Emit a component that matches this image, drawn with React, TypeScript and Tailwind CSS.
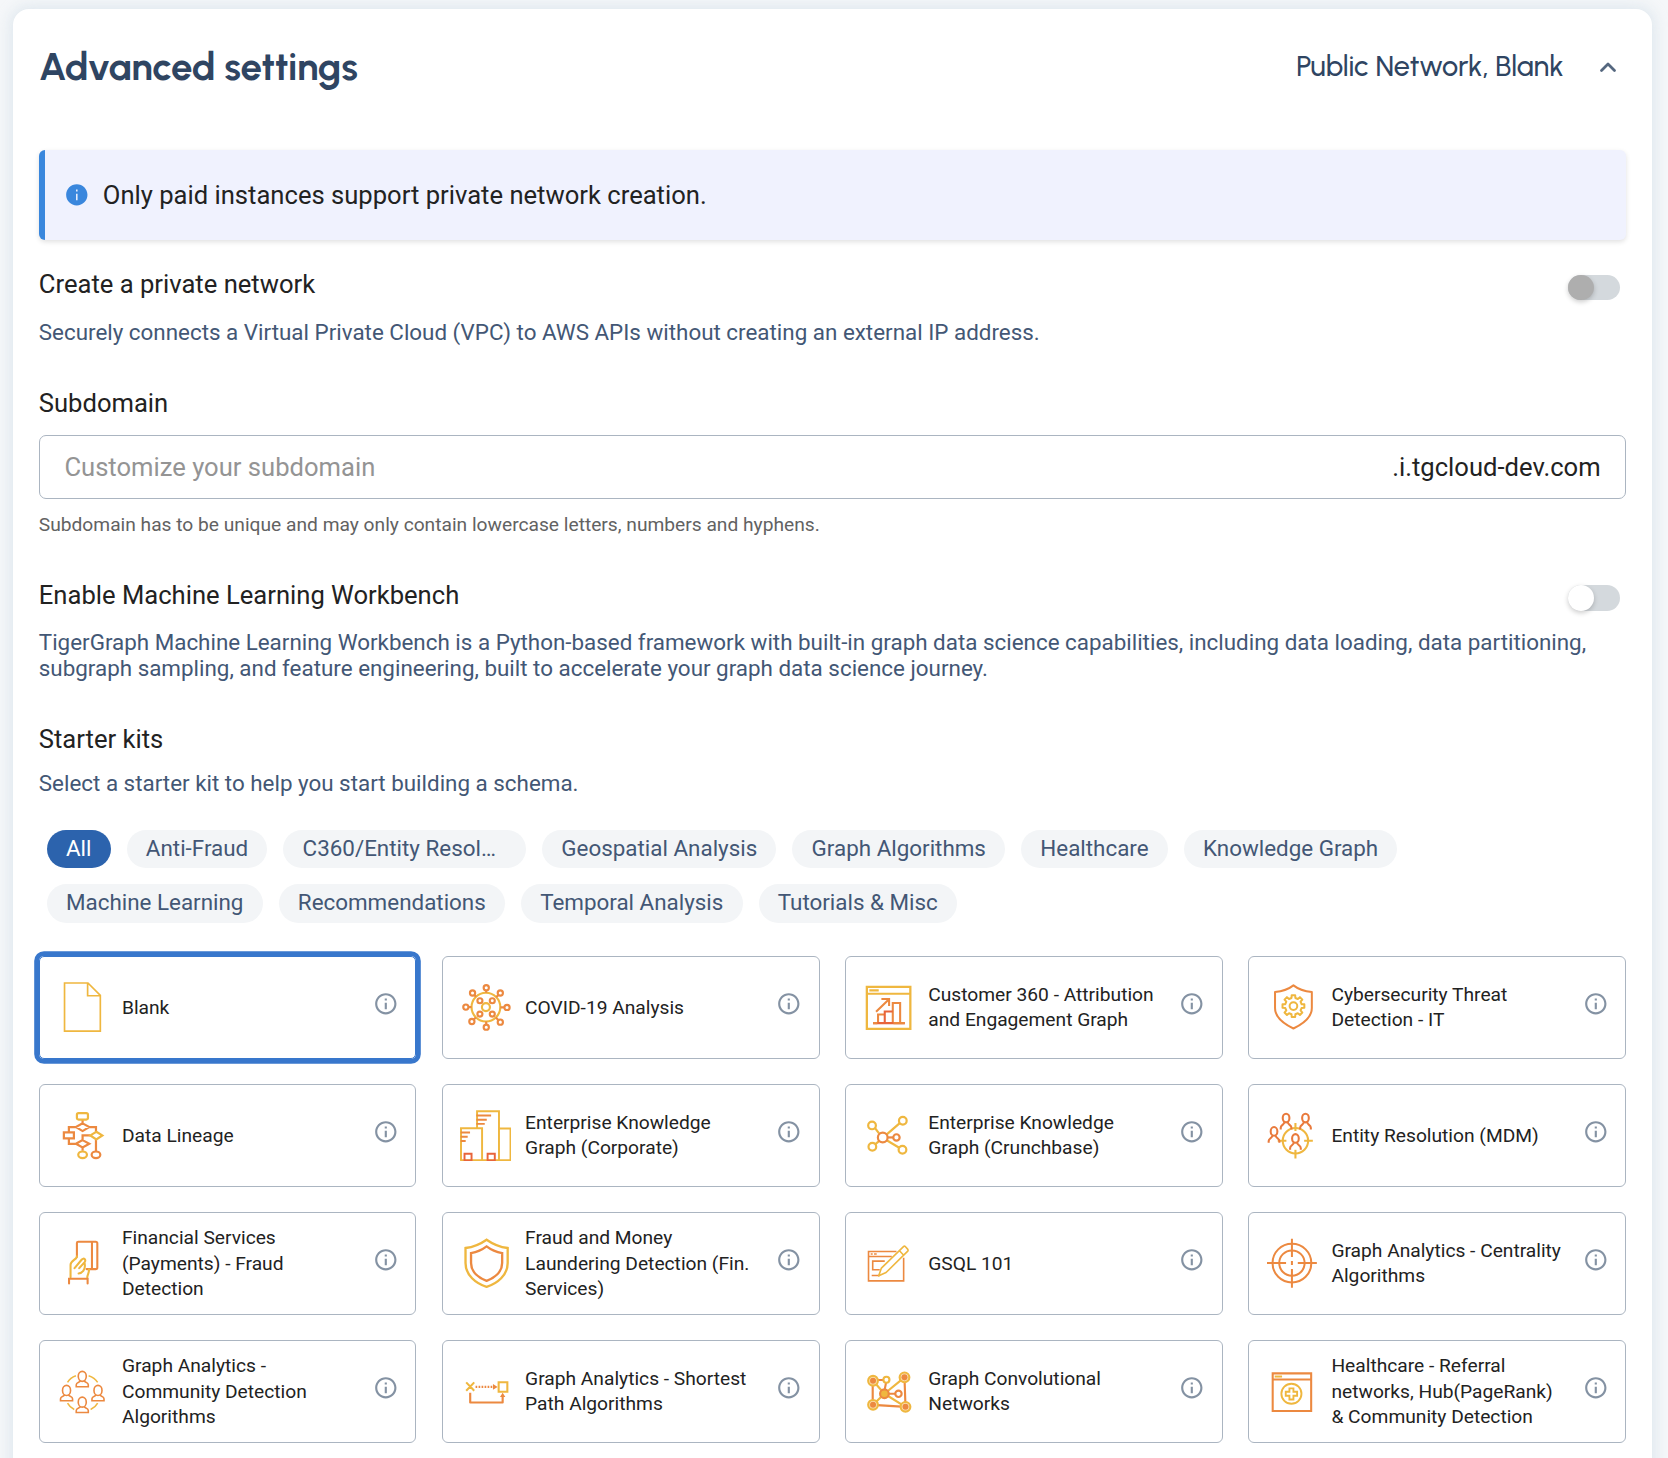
import type { ReactNode } from "react";

const YELLOW = "#efb73f";
const ORANGE = "#ec8940";
const RED = "#e8643a";

type Kit = { lines: string[]; box: string; art: ReactNode; selected?: boolean };

const y = { stroke: YELLOW, fill: "none" };
const o = { stroke: ORANGE, fill: "none" };
const r = { stroke: RED, fill: "none" };

function gearPath(cx: number, cy: number, outer: number, inner: number, teeth: number) {
  const pts: string[] = [];
  const step = (Math.PI * 2) / teeth;
  for (let i = 0; i < teeth; i++) {
    const a = i * step - Math.PI / 2;
    const marks: [number, number][] = [
      [-0.3, inner],
      [-0.2, outer],
      [0.2, outer],
      [0.3, inner],
    ];
    for (const [f, rad] of marks) {
      pts.push(`${(cx + Math.cos(a + f * step) * rad).toFixed(1)} ${(cy + Math.sin(a + f * step) * rad).toFixed(1)}`);
    }
  }
  return `M${pts.join("L")}Z`;
}

/* Head and open shoulders, centred on the head. */
function Person({ x, cy }: { x: number; cy: number }) {
  return (
    <g transform={`translate(${x} ${cy})`} {...r} stroke="#e97a3c">
      <ellipse rx="10" ry="13" />
      <path d="M-16 34V29C-16 21-5 20-5 12M16 34V29C16 21 5 20 5 12" />
    </g>
  );
}

/* Head over a closed bust. */
function Bust({ x, cy }: { x: number; cy: number }) {
  return (
    <g transform={`translate(${x} ${cy})`} {...o} strokeWidth="4.8">
      <ellipse rx="12" ry="15" />
      <path d="M-6 13C-6 18-18 17-18 25V31H18V25C18 17 6 18 6 13" />
    </g>
  );
}

const spikes: [number, number][] = [
  [166, 142], [208, 158], [228, 201], [208, 245], [166, 260], [123, 243], [105, 200], [125, 158],
];

const kits: Kit[] = [
  {
    lines: ["Blank"],
    box: "78.5 125 153 153",
    selected: true,
    art: <path {...y} strokeWidth="5" d="M104 128H174L211 165V272H104ZM173 129V166H211" />,
  },
  {
    lines: ["COVID-19 Analysis"],
    box: "87.5 125 153 153",
    art: (
      <g strokeWidth="6.4">
        <circle {...y} cx="165" cy="200" r="43" />
        <circle {...y} cx="165" cy="200" r="12" />
        {[[147, 181], [184, 181], [147, 221], [184, 221]].map(([cx, cy]) => (
          <circle key={`${cx}-${cy}`} {...o} cx={cx} cy={cy} r="7.500" />
        ))}
        {spikes.map(([cx, cy]) => {
          const dx = 165 - cx;
          const dy = 200 - cy;
          const d = Math.hypot(dx, dy);
          return (
            <g key={`${cx}-${cy}`} {...o}>
              <circle cx={cx} cy={cy} r="7.800" />
              <path d={`M${cx + (dx / d) * 9} ${cy + (dy / d) * 9}L${165 - (dx / d) * 43} ${200 - (dy / d) * 43}`} />
            </g>
          );
        })}
      </g>
    ),
  },
  {
    lines: ["Customer 360 - Attribution", "and Engagement Graph"],
    box: "69 125 153 153",
    art: (
      <g strokeWidth="6.2">
        <path {...y} strokeWidth="6.8" d="M80.500 139.500H210.500V265H80.500Z" />
        <path {...y} d="M80 160H211M88 150H116" />
        <path {...o} d="M158 248V188H180V248M114 248V222H134M108 214L146 177M124 176H147V197" />
        <path {...r} d="M134 248V213H158M99 248H194" />
        <path {...o} d="M160 248H194M99 248H112" />
      </g>
    ),
  },
  {
    lines: ["Cybersecurity Threat", "Detection - IT"],
    box: "78 125 153 153",
    art: (
      <g strokeWidth="6" strokeLinejoin="round">
        <path {...o} d="M160 135C146 146 125 153 105 155V203C105 234 135 252 160 264C185 252 215 234 215 203V155C195 153 174 146 160 135Z" />
        <path {...y} d={gearPath(160, 197, 33, 25, 8)} />
        <circle {...y} cx="160" cy="197" r="11.500" />
      </g>
    ),
  },
  {
    lines: ["Data Lineage"],
    box: "78.5 509 153 153",
    art: (
      <g strokeWidth="6.6">
        <path {...o} d="M158 538V548M158 549L178 560L158 572L138 560ZM140 560H117V575M102 576H132V594H102ZM117 594V610H138M158 599L178 610L158 621L138 610ZM176 560H198V574M181 585H158V599M158 621V631M198 597V632" />
        <rect {...y} x="141" y="518.500" width="33" height="19" rx="5" />
        <path {...y} d="M199 574L217 585L199 597L181 585Z" />
        <ellipse {...y} cx="158" cy="643" rx="13" ry="10" />
        <ellipse {...o} cx="198" cy="643" rx="13" ry="10" />
      </g>
    ),
  },
  {
    lines: ["Enterprise Knowledge", "Graph (Corporate)"],
    box: "89 509.500 153 153",
    art: (
      <g strokeWidth="5.8">
        <path {...y} d="M140 563V513H205.500V661M205 565H240V661M92 661V564H155V661" />
        <path {...y} d="M90 659.500H243" />
        <path {...o} d="M138 526H182M138 538.500H169M138 551H163M91 577H119M91 589.500H112M91 602H106" />
        <path {...r} d="M102.500 640H123.500V660H102.500ZM171.500 640H193V660H171.500Z" />
      </g>
    ),
  },
  {
    lines: ["Enterprise Knowledge", "Graph (Crunchbase)"],
    box: "69 509 153 153",
    art: (
      <g strokeWidth="6.600">
        <path {...y} d="M105 563L117 579M178 549L140 582M106 611L117 602M176 621L141 600" />
        <circle {...y} cx="96" cy="555" r="11.500" />
        <circle {...y} cx="188" cy="541" r="11.500" />
        <circle {...y} cx="97" cy="619" r="11.500" />
        <circle {...y} cx="187" cy="628" r="11.500" />
        <circle {...o} cx="128" cy="591" r="14.500" />
        <circle {...o} cx="169" cy="591" r="9.500" />
        <path {...o} d="M143 591H160" />
      </g>
    ),
  },
  {
    lines: ["Entity Resolution (MDM)"],
    box: "78 509 153 153",
    art: (
      <g strokeWidth="6.200">
        <circle {...y} cx="166" cy="601" r="38" />
        <path {...y} d="M166 548V572M166 628V654M113 601H139M192 601H218" />
        <Person x={138} cy={533} />
        <Person x={196} cy={533} />
        <Person x={102} cy={573} />
        <path fill="#fff" stroke="none" d="M150 626V617L157 606 156 590 166 582 176 590 175 606 182 617V626Z" />
        <Person x={166} cy={594} />
      </g>
    ),
  },
  {
    lines: ["Financial Services", "(Payments) - Fraud", "Detection"],
    box: "78.5 113 153 153",
    art: (
      <g strokeWidth="6.200" strokeLinecap="round">
        <path {...o} d="M141 170V128Q141 124 145 124H197Q202 124 202 129V201Q202 206 197 206H170M186 124V206" />
        <path {...y} d="M122 230V193C122 181 141 177 141 168M134 203L155 178C162 170 169 178 164 185L148 203M146 219C158 218 165 207 165 196L164 188M172 230C173 222 178 216 177 207" />
        <path {...o} d="M117.500 249V235H173V249" />
      </g>
    ),
  },
  {
    lines: ["Fraud and Money", "Laundering Detection (Fin.", "Services)"],
    box: "87.5 113 153 153",
    art: (
      <g strokeWidth="7">
        <path {...y} d="M167 118C150 130 128 140 104 143V188C104 224 135 249 167 259C199 249 230 224 230 188V143C206 140 184 130 167 118Z" />
        <path {...o} d="M167 138C154 148 138 155 120.500 158V188C120.500 214 143 232 167 241C191 232 213.500 214 213.500 188V158C196 155 180 148 167 138Z" />
      </g>
    ),
  },
  {
    lines: ["GSQL 101"],
    box: "69 113 153 153",
    art: (
      <g strokeWidth="4.8">
        <path {...o} d="M169 153.500H85.500V241H190.500V172M85 168.500H155M92 161H98M102 161H110M134 182H98V208H119M95 225H120" />
        <path {...y} strokeLinejoin="round" d="M116 226L124 203L190 139Q193 136 196 139L203 147Q205 150 202 153L138 216ZM178 151L190 164" />
      </g>
    ),
  },
  {
    lines: ["Graph Analytics - Centrality", "Algorithms"],
    box: "78 113 153 153",
    art: (
      <g {...o} strokeWidth="6">
        <circle cx="155.500" cy="188" r="58" />
        <circle cx="155.500" cy="188" r="38" />
        <path d="M155.500 115V170M155.500 206V262M81 188H138M173 188H230M155.500 182V194" />
      </g>
    ),
  },
  {
    lines: ["Graph Analytics -", "Community Detection", "Algorithms"],
    box: "78.5 497 153 153",
    art: (
      <g>
        <path {...y} strokeWidth="4.600" d="M113 546Q121 532 138 526M176 526Q194 532 203 546M113 608Q120 621 133 627M182 627Q196 621 203 608" />
        <Bust x={157} cy={528} />
        <Bust x={110} cy={570} />
        <Bust x={204} cy={570} />
        <Bust x={157} cy={605} />
      </g>
    ),
  },
  {
    lines: ["Graph Analytics - Shortest", "Path Algorithms"],
    box: "87.5 497 153 153",
    art: (
      <g strokeWidth="6.2">
        <path {...y} d="M106 546L130 571M130 546L106 571M203 545.500H229V574H203Z" />
        <path {...o} strokeDasharray="5 4" d="M134 559.500H186" />
        <path fill={ORANGE} d="M186 551L200 559.500L186 568ZM207 590L215 577L223 590Z" />
        <path {...o} strokeWidth="6.400" strokeLinejoin="round" d="M118 577V606H215V588" />
      </g>
    ),
  },
  {
    lines: ["Graph Convolutional", "Networks"],
    box: "69 497 153 153",
    art: (
      <g strokeWidth="6.4">
        <path {...o} d="M98 541V613M193 531L196 619M99 613L196 619M99 539H132" />
        <path {...y} d="M99 541L133 580M193 531L133 580M99 613L133 580M196 619L133 580" />
        <path {...o} d="M138 546L134 567M145 580H165" />
        {[[99, 541], [193, 531], [99, 613], [196, 619]].map(([cx, cy]) => (
          <g key={`${cx}-${cy}`}>
            <circle cx={cx} cy={cy} r="14.500" fill="#fbe3b8" stroke={YELLOW} />
            <circle cx={cx} cy={cy} r="9" fill={ORANGE} />
          </g>
        ))}
        <circle cx="133" cy="580" r="13" fill={YELLOW} stroke={ORANGE} />
        <circle cx="139" cy="538" r="9" fill="#fff" stroke={YELLOW} />
        <circle cx="175" cy="580" r="9.500" fill="#fff" stroke={ORANGE} />
      </g>
    ),
  },
  {
    lines: ["Healthcare - Referral", "networks, Hub(PageRank)", "& Community Detection"],
    box: "78 497 153 153",
    art: (
      <g strokeWidth="6.200">
        <path {...o} d="M98 519H213V631.500H98ZM98 537.500H213" />
        <path {...y} strokeWidth="6" d="M104 528.500H126" />
        <circle {...y} strokeWidth="5.600" cx="154" cy="580" r="30" />
        <path {...y} strokeWidth="5.600" d="M148 564H160V574H171V586H160V597H148V586H137V574H148Z" />
      </g>
    ),
  },
];

const filters = [
  "All",
  "Anti-Fraud",
  "C360/Entity Resol…",
  "Geospatial Analysis",
  "Graph Algorithms",
  "Healthcare",
  "Knowledge Graph",
  "Machine Learning",
  "Recommendations",
  "Temporal Analysis",
  "Tutorials & Misc",
];

function InfoOutline() {
  return (
    <svg viewBox="0 0 24 24" className="mb-[6.8px] size-[25.6px] shrink-0 fill-[#8492a3]">
      <path d="M11 7h2v2h-2zm0 4h2v6h-2zm1-9C6.480 2 2 6.480 2 12s4.480 10 10 10 10-4.480 10-10S17.520 2 12 2zm0 18c-4.410 0-8-3.590-8-8s3.590-8 8-8 8 3.590 8 8-3.590 8-8 8z" />
    </svg>
  );
}

function Toggle({ disabled = false }: { disabled?: boolean }) {
  return (
    <div className="mr-[6px] flex h-[25.6px] w-[51.6px] shrink-0 rounded-full bg-[#d4d9dd]">
      <span
        className={
          disabled
            ? "size-[25.6px] rounded-full bg-[#aeaeae] shadow-[0_2px_5px_rgba(0,0,0,0.2)]"
            : "size-[25.6px] rounded-full bg-white shadow-[0_2px_5px_rgba(0,0,0,0.2)]"
        }
      />
    </div>
  );
}

function KitCard({ kit }: { kit: Kit }) {
  return (
    <div
      className={
        kit.selected
          ? "flex h-[103px] items-center rounded-[5px] border border-[#3877cc] pl-[16.6px] pr-[16.6px] shadow-[0_0_0_4.8px_#3877cc]"
          : "flex h-[103px] items-center rounded-[6px] border border-[#abb5c1] pl-[16.6px] pr-[16.6px]"
      }
    >
      <svg viewBox={kit.box} className="size-[51.2px] shrink-0" fill="none">
        {kit.art}
      </svg>
      <p className="ml-[14.4px] min-w-0 flex-1 text-[19.2px] leading-[25.6px] whitespace-nowrap text-[#222]">
        {kit.lines.map((line) => (
          <span key={line} className="block">
            {line}
          </span>
        ))}
      </p>
      <InfoOutline />
    </div>
  );
}

export default function App() {
  return (
    <div className="h-[1458px] overflow-hidden bg-[#f5f7f9] pt-[9px] pr-4 pl-[13px] font-[Roboto,sans-serif] text-[#222]">
      <main className="h-[1500px] rounded-[16px] bg-white pr-[26.2px] pl-[25.8px] shadow-[0_0_14px_3px_rgba(214,225,233,0.7)]">
        <header className="flex h-[115px] items-center justify-between font-[Urbanist,Lato,sans-serif] text-[#2f4562]">
          <h1 className="pt-[2px] text-[38.4px] font-bold tracking-[-0.22px]">Advanced settings</h1>
          <div className="flex items-center">
            <span className="text-[28.8px] font-[540] tracking-[-0.1px]">Public Network, Blank</span>
            <svg viewBox="0 0 20 14" className="mr-[8.200px] ml-[34px] h-[14px] w-[20px]" fill="none" stroke="#55677f" strokeWidth="2.8" strokeLinecap="round" strokeLinejoin="round">
              <path d="M3.500 10.500L10 4L16.500 10.500" />
            </svg>
          </div>
        </header>

        <div className="mt-[26px] flex h-[90px] items-center rounded-[6px] border-l-[6.400px] border-[#3a87dd] bg-[#f0f2fe] pl-[19.600px] shadow-[0_2px_5px_rgba(0,0,0,0.12)]">
          <svg viewBox="0 0 24 24" className="size-[25.600px] fill-[#3a87dd]">
            <path d="M12 2C6.480 2 2 6.480 2 12s4.480 10 10 10 10-4.480 10-10S17.520 2 12 2zm.7 15h-1.400v-6h1.400v6zm0-8h-1.400V7h1.400v2z" />
          </svg>
          <span className="ml-[12.800px] text-[25.600px]">Only paid instances support private network creation.</span>
        </div>

        <section className="mt-[29.400px]">
          <div className="flex h-[30px] items-start justify-between">
            <h2 className="text-[25.600px] leading-[30px]">Create a private network</h2>
            <div className="mt-[5.300px]">
              <Toggle disabled />
            </div>
          </div>
          <p className="mt-[20.600px] text-[22.400px] leading-[25.600px] text-[#435775]">
            Securely connects a Virtual Private Cloud (VPC) to AWS APIs without creating an external IP address.
          </p>
        </section>

        <section className="mt-[42.800px]">
          <h2 className="text-[25.600px] leading-[30px]">Subdomain</h2>
          <div className="mt-[16.600px] flex h-[64px] items-center rounded-[7px] border border-[#abb5c1] pr-[24.200px] pl-[24.600px] text-[25.600px]">
            <input
              className="min-w-0 flex-1 bg-transparent outline-none placeholder:text-[#949494]"
              placeholder="Customize your subdomain"
            />
            <span>.i.tgcloud-dev.com</span>
          </div>
          <p className="mt-[13.100px] text-[19.200px] leading-[25.600px] text-[#626262]">
            Subdomain has to be unique and may only contain lowercase letters, numbers and hyphens.
          </p>
        </section>

        <section className="mt-[42.500px]">
          <div className="flex h-[30px] items-start justify-between">
            <h2 className="text-[25.600px] leading-[30px]">Enable Machine Learning Workbench</h2>
            <div className="mt-[5px]">
              <Toggle />
            </div>
          </div>
          <p className="mt-[18.800px] text-[22.400px] leading-[26px] text-[#435775]">
            TigerGraph Machine Learning Workbench is a Python-based framework with built-in graph data science
            capabilities, including data loading, data partitioning, subgraph sampling, and feature engineering, built
            to accelerate your graph data science journey.
          </p>
        </section>

        <section className="mt-[43.100px]">
          <h2 className="text-[25.600px] leading-[30px]">Starter kits</h2>
          <p className="mt-[16.900px] text-[22.400px] leading-[25.600px] text-[#435775]">
            Select a starter kit to help you start building a schema.
          </p>

          <div className="mt-[33px] flex w-[1440px] flex-wrap gap-x-4 gap-y-[16.400px] pl-2">
            {filters.map((name, i) => (
              <span
                key={name}
                className={
                  i === 0
                    ? "h-[38.400px] rounded-full bg-[#2c63ad] px-[19.200px] text-[22.400px] leading-[37px] text-white"
                    : "h-[38.400px] rounded-full bg-[#f3f5f7] px-[19.200px] text-[22.400px] leading-[37px] text-[#435775]"
                }
              >
                <span className={i === 2 ? "block w-[204.400px]" : "block"}>{name}</span>
              </span>
            ))}
          </div>

          <div className="mt-[33.200px] grid grid-cols-4 gap-x-[25.600px] gap-y-[25px]">
            {kits.map((kit) => (
              <KitCard key={kit.lines.join(" ")} kit={kit} />
            ))}
          </div>
        </section>
      </main>
    </div>
  );
}
